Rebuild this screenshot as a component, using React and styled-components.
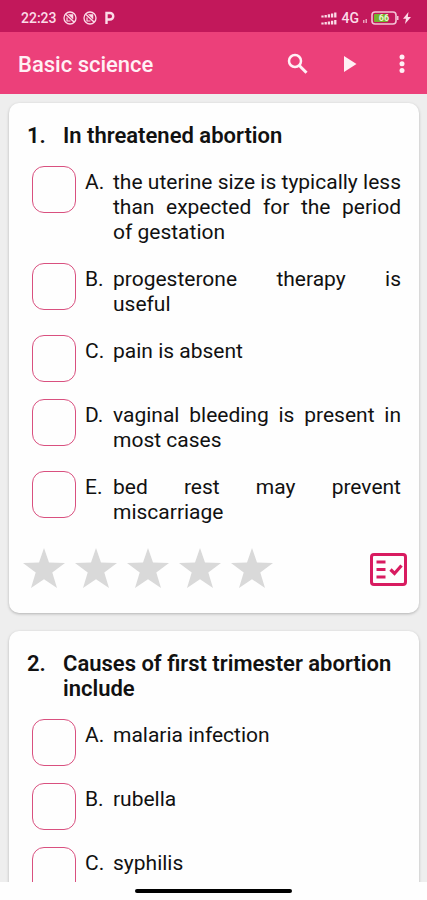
import React from "react";
import styled, { createGlobalStyle } from "styled-components";

const GlobalStyle = createGlobalStyle`
    * {
        box-sizing: border-box;
    }

    body {
        margin: 0;
        background-color: #fefefe;
        font-family: Roboto, "Liberation Sans", sans-serif;
        color: #111;
    }
`

const Tela = styled.div`
    display: flex;
    flex-direction: column;
    height: 100vh;
`

//BARRA DE STATUS
const BarraStatus = styled.div`
    display: flex;
    flex-shrink: 0;
    align-items: center;
    justify-content: space-between;
    height: 32px;
    padding: 4px 16px 0 21px;
    background-color: #c2185b;
    color: #fbdbe7;
    font-size: 14px;
    font-weight: 500;
`

const GrupoStatus = styled.div`
    display: flex;
    align-items: center;
    gap: ${({ $gap }) => $gap}px;

    svg {
        display: block;
    }
`

//CABECALHO
const Cabecalho = styled.header`
    display: flex;
    flex-shrink: 0;
    align-items: center;
    height: 62px;
    padding: 2px 10px 0 18px;
    background-color: #ec407a;
    color: #fff0f5;
`

const Titulo = styled.h1`
    flex: 1;
    margin: 0;
    font-size: 22px;
    font-weight: 500;
`

const Acoes = styled.div`
    display: flex;
    gap: 22px;
`

const BotaoIcone = styled.button`
    display: flex;
    align-items: center;
    justify-content: center;
    min-width: 30px;
    padding: 0;
    border: 0;
    background: none;
    color: ${({ $cor }) => $cor || "#fff0f5"};
    cursor: pointer;

    svg {
        display: block;
    }
`

//QUESTOES
const Lista = styled.main`
    display: flex;
    flex: 1;
    flex-direction: column;
    gap: 18px;
    min-height: 0;
    padding: 9px 8px 0 9px;
    overflow-y: auto;
    scrollbar-width: none;
    background-color: #eeeeee;
`

const Cartao = styled.section`
    flex-shrink: 0;
    padding: 20px 18px 23px;
    border-radius: 10px;
    background-color: #fefefe;
    box-shadow: 0 1px 3px rgba(0, 0, 0, 0.25);
`

const Pergunta = styled.h2`
    display: flex;
    margin: 0 0 18px;
    font-size: 22px;
    font-weight: 600;
    line-height: 25px;
`

const Numero = styled.span`
    flex: 0 0 36px;
`

const Opcoes = styled.div`
    display: flex;
    flex-direction: column;
    gap: 17px;
    padding-left: 5px;
`

const Opcao = styled.label`
    display: flex;
    align-items: flex-start;
    font-size: 21px;
    line-height: 25px;
    cursor: pointer;
`

const Caixa = styled.input`
    flex: 0 0 44px;
    height: 47px;
    margin: 0 9px 0 0;
    border: 1px solid #d9507f;
    border-radius: 12px;
    appearance: none;
    background-color: #fefefe;

    &:checked {
        background-color: #ec407a;
    }
`

const Letra = styled.span`
    flex: 0 0 28px;
    padding-top: 4px;
`

const Texto = styled.span`
    flex: 1;
    min-width: 0;
    padding: 4px 0 1px;
`

const Linha = styled.span`
    display: block;
    text-align: justify;
    text-align-last: justify;

    &:last-child {
        text-align-last: left;
    }
`

const Rodape = styled.div`
    display: flex;
    align-items: center;
    justify-content: space-between;
    margin: 20px -11px 0 -4px;
`

const Estrelas = styled.div`
    display: flex;
    gap: 10px;
`

const BarraInferior = styled.div`
    display: flex;
    flex-shrink: 0;
    justify-content: center;
    height: 18px;
    padding-top: 7px;
    background-color: #fefefe;
`

const Indicador = styled.div`
    width: 37%;
    height: 4px;
    border-radius: 2px;
    background-color: #000;
`

const questoes = [
    {
        pergunta: "In threatened abortion",
        opcoes: [
            ["the uterine size is typically less", "than expected for the period", "of gestation"],
            ["progesterone therapy is", "useful"],
            ["pain is absent"],
            ["vaginal bleeding is present in", "most cases"],
            ["bed rest may prevent", "miscarriage"],
        ],
        avaliacao: true,
    },
    {
        pergunta: "Causes of first trimester abortion include",
        opcoes: [["malaria infection"], ["rubella"], ["syphilis"]],
    },
]

function IconeBloqueio(){
    return(
        <svg width="14" height="14" viewBox="0 0 14 14" fill="none" stroke="currentColor">
            <circle cx="7" cy="7" r="6" strokeWidth="1.3" />
            <path d="M3 3.5 11 11" strokeWidth="1.5" />
            <path d="M5.5 3.5h4.5v4.5z" fill="currentColor" strokeWidth="0.5" />
            <path d="M4 6.5v3.5h3.5" strokeWidth="1.2" />
        </svg>
    )
}

function IconeSinal(){
    return(
        <svg width="17" height="13" viewBox="0 0 17 13" stroke="currentColor" strokeWidth="2.3">
            <path d="M1.5 3.5v2M4.7 3v2.5M7.9 2.3v3.2M11.1 1.5v4M14.3 .5v5" />
            <path d="M1.5 10.5v2M4.7 10v2.5M7.9 9.5v3M11.1 8.7v3.8M14.3 8v4.5" />
        </svg>
    )
}

function IconeBateria(){
    return(
        <svg width="28" height="14" viewBox="0 0 28 14">
            <rect x="1" y="1" width="24" height="12" rx="3" fill="none" stroke="#f3c3d6" strokeWidth="1.6" />
            <rect x="3" y="3" width="14" height="8" rx="1" fill="#73b42c" />
            <path d="M26 5h1.5v4h-1.5z" fill="#f3c3d6" />
            <text x="13" y="10" textAnchor="middle" fontSize="9" fontWeight="700" fill="#e9f3d2">66</text>
        </svg>
    )
}

function Estrela(){
    return(
        <svg width="42" height="40" viewBox="0 0 42 40" fill="#d9d9d9">
            <path d="M21 0 26 14.5 42 15 29.3 24.6 34 40 21 31.2 8 40 12.7 24.6 0 15 16 14.5z" />
        </svg>
    )
}

function Questao({ numero, questao }){
    return(
        <Cartao>
            <Pergunta>
                <Numero>{numero}.</Numero>
                <span>{questao.pergunta}</span>
            </Pergunta>

            <Opcoes>
                {questao.opcoes.map((linhas, i) => (
                    <Opcao key={linhas[0]}>
                        <Caixa type="checkbox" />
                        <Letra>{"ABCDE"[i]}.</Letra>
                        <Texto>
                            {linhas.map((linha) => (
                                <Linha key={linha}>{linha} </Linha>
                            ))}
                        </Texto>
                    </Opcao>
                ))}
            </Opcoes>

            {questao.avaliacao && (
                <Rodape>
                    <Estrelas>
                        {[1, 2, 3, 4, 5].map((n) => (
                            <BotaoIcone key={n} type="button" aria-label={`${n}`}>
                                <Estrela />
                            </BotaoIcone>
                        ))}
                    </Estrelas>
                    <BotaoIcone type="button" aria-label="Check" $cor="#d81b60">
                        <svg width="48" height="44" viewBox="0 0 48 44" fill="none" stroke="currentColor" strokeWidth="3">
                            <rect x="7.5" y="8.5" width="34" height="30" rx="2.5" />
                            <path d="M12.5 16h9M12.5 23.5h9M12.5 31h9" />
                            <path d="M26.5 23.5l4 4 7-8" strokeWidth="3.2" />
                        </svg>
                    </BotaoIcone>
                </Rodape>
            )}
        </Cartao>
    )
}

export default function App(){
    return(
        <Tela>
            <GlobalStyle />

            <BarraStatus>
                <GrupoStatus $gap={6}>
                    <span>22:23</span>
                    <IconeBloqueio />
                    <IconeBloqueio />
                    <svg width="12" height="14" viewBox="0 0 12 14" fill="none" stroke="currentColor" strokeWidth="2.4">
                        <path d="M3.5 13V2h3.5a3 3 0 0 1 0 6.5H3.5" />
                    </svg>
                </GrupoStatus>
                <GrupoStatus $gap={4}>
                    <IconeSinal />
                    <span>4G</span>
                    <svg width="4" height="14" viewBox="0 0 4 14" fill="currentColor" opacity="0.7">
                        <path d="M0 9h1.5v3H0zM2.5 8H4v4H2.5z" />
                    </svg>
                    <IconeBateria />
                    <svg width="8" height="12" viewBox="0 0 8 12" fill="currentColor">
                        <path d="M5.5 0 0 6.8h3L2 12l6-7H4.8z" />
                    </svg>
                </GrupoStatus>
            </BarraStatus>

            <Cabecalho>
                <Titulo>Basic science</Titulo>
                <Acoes>
                    <BotaoIcone type="button" aria-label="Search">
                        <svg width="22" height="22" viewBox="0 0 22 22" fill="none" stroke="currentColor" strokeWidth="2.5">
                            <circle cx="8" cy="8" r="6" />
                            <path d="M12.3 12.5 19.5 19.7" strokeWidth="3" />
                        </svg>
                    </BotaoIcone>
                    <BotaoIcone type="button" aria-label="Play">
                        <svg width="14" height="16" viewBox="0 0 14 16" fill="currentColor">
                            <path d="M1 0 13.5 8 1 16z" />
                        </svg>
                    </BotaoIcone>
                    <BotaoIcone type="button" aria-label="More">
                        <svg width="6" height="20" viewBox="0 0 6 20" fill="currentColor">
                            <circle cx="3" cy="3" r="2.5" />
                            <circle cx="3" cy="9.8" r="2.5" />
                            <circle cx="3" cy="16.6" r="2.5" />
                        </svg>
                    </BotaoIcone>
                </Acoes>
            </Cabecalho>

            <Lista>
                {questoes.map((questao, i) => (
                    <Questao key={questao.pergunta} numero={i + 1} questao={questao} />
                ))}
            </Lista>

            <BarraInferior>
                <Indicador />
            </BarraInferior>
        </Tela>
    )
}
